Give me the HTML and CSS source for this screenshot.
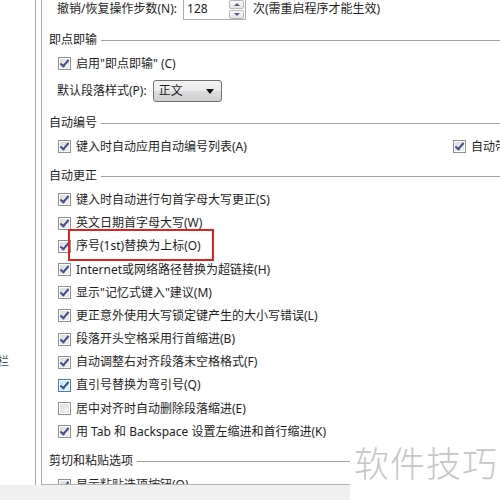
FILE: index.html
```html
<!DOCTYPE html>
<html lang="zh-CN">
<head>
    <meta charset="UTF-8">
    <title>Word 选项 - 高级</title>
    <link rel="stylesheet" href="styles.css">
</head>
<body>

<div class="window">
    <div class="panes">
        <nav class="nav">
            <div class="nav-item">栏</div>
        </nav>

        <main class="options">
            <div class="row row--first">
                <span class="label">撤销/恢复操作步数(N):</span>
                <div class="spin">
                    <span class="spin-value">128</span>
                    <span class="spin-buttons">
                        <span class="spin-btn spin-btn--up"></span>
                        <span class="spin-btn spin-btn--down"></span>
                    </span>
                </div>
                <span class="label">次(需重启程序才能生效)</span>
            </div>

            <section class="group">
                <div class="group-title">即点即输</div>
                <label class="row opt"><span class="box checked"></span>启用"即点即输" (C)</label>
                <div class="row row--combo">
                    <span class="label">默认段落样式(P):</span>
                    <div class="combo">正文<span class="combo-arrow"></span></div>
                </div>
            </section>

            <section class="group">
                <div class="group-title">自动编号</div>
                <div class="row split">
                    <label class="opt"><span class="box checked"></span>键入时自动应用自动编号列表(A)</label>
                    <label class="opt"><span class="box checked"></span>自动带圆括号的编号(R)</label>
                </div>
            </section>

            <section class="group">
                <div class="group-title">自动更正</div>
                <label class="row opt"><span class="box checked"></span>键入时自动进行句首字母大写更正(S)</label>
                <label class="row opt"><span class="box checked"></span>英文日期首字母大写(W)</label>
                <label class="row opt marked"><span class="box checked"></span>序号(1st)替换为上标(O)</label>
                <label class="row opt"><span class="box checked"></span>Internet或网络路径替换为超链接(H)</label>
                <label class="row opt"><span class="box checked"></span>显示"记忆式键入"建议(M)</label>
                <label class="row opt"><span class="box checked"></span>更正意外使用大写锁定键产生的大小写错误(L)</label>
                <label class="row opt"><span class="box checked"></span>段落开头空格采用行首缩进(B)</label>
                <label class="row opt"><span class="box checked"></span>自动调整右对齐段落末空格格式(F)</label>
                <label class="row opt"><span class="box checked hover"></span>直引号替换为弯引号(Q)</label>
                <label class="row opt"><span class="box"></span>居中对齐时自动删除段落缩进(E)</label>
                <label class="row opt"><span class="box checked"></span>用 Tab 和 Backspace 设置左缩进和首行缩进(K)</label>
            </section>

            <section class="group">
                <div class="group-title">剪切和粘贴选项</div>
                <label class="row opt"><span class="box checked"></span>显示粘贴选项按钮(O)</label>
            </section>
        </main>
    </div>
    <div class="footer"></div>
</div>

<div class="watermark">软件技巧</div>

</body>
</html>
```

FILE: styles.css
```css
* {
    margin: 0;
    padding: 0;
    box-sizing: border-box;
}

body {
    width: 500px;
    height: 500px;
    overflow: hidden;
    position: relative;
    background: #f0f0f0;
    font-family: "Noto Sans", "Noto Sans CJK SC", sans-serif;
    font-size: 12px;
    line-height: 16px;
    color: #1e1e1e;
}

.panes {
    display: flex;
    gap: 5px;
    height: 485px;
    background: #fff;
}

.nav {
    width: 36px;
    flex: none;
    border-right: 1px solid #a8a8a8;
    padding-top: 354px;
    overflow: hidden;
}

.nav-item {
    margin-left: -3px;
    color: #444;
}

.footer {
    height: 15px;
    background: #f0f0f0;
}

.options {
    flex: 1;
    overflow: hidden;
    border-left: 1px solid #a8a8a8;
    border-bottom: 1px solid #b4b4b4;
}

/* rows */

.row {
    display: flex;
    align-items: center;
    height: 23.2px;
    padding-left: 16px;
    white-space: nowrap;
}

.row--first {
    height: 26px;
    margin-top: -4px;
    padding-left: 15px;
}

.row--combo {
    height: 28px;
    margin-top: 2px;
    padding-left: 15px;
}

.group {
    margin-top: 6px;
}

.group-title {
    display: flex;
    align-items: center;
    height: 24px;
    padding-left: 7px;
    color: #222;
    white-space: nowrap;
}

.group-title::after {
    content: "";
    flex: 1;
    height: 1px;
    margin-left: 4px;
    background: #a0a0a0;
}

.opt {
    display: flex;
    align-items: center;
}

.split .opt:first-child {
    width: 395px;
    flex: none;
}

.split .opt {
    flex: none;
}

/* checkbox */

.box {
    position: relative;
    width: 13px;
    height: 13px;
    flex: none;
    margin-right: 5px;
    border: 1px solid #8e8f8f;
    background: #fff;
}

.box::before {
    content: "";
    position: absolute;
    inset: 1px;
    background: linear-gradient(135deg, #dcdcdc, #f6f6f6);
    border: 1px solid #e4e4e4;
}

.box.hover {
    border-color: #3c7fb1;
}

.box.hover::before {
    background: linear-gradient(135deg, #b9e9fb, #e8f9fe);
    border-color: #c6ecfa;
}

.box.checked::after {
    content: "";
    position: absolute;
    left: 3px;
    top: 0px;
    width: 3px;
    height: 7px;
    border-right: 2px solid #3d4f8c;
    border-bottom: 2px solid #3d4f8c;
    transform: rotate(40deg);
}

/* red annotation */

.marked {
    position: relative;
}

.marked::after {
    content: "";
    position: absolute;
    left: 26px;
    top: -6px;
    width: 142px;
    height: 28px;
    border: 2px solid #e0221e;
}

/* spin box */

.spin {
    display: flex;
    align-items: center;
    justify-content: space-between;
    width: 63px;
    height: 22px;
    margin: 0 7px 0 6px;
    border: 1px solid #abadb3;
    border-top-color: #abadb3;
    background: #fff;
}

.spin-value {
    padding-left: 3px;
}

.spin-buttons {
    display: flex;
    flex-direction: column;
    gap: 1px;
    padding: 1px;
}

.spin-btn {
    position: relative;
    width: 15px;
    height: 9px;
    border: 1px solid #b7b7b7;
    border-radius: 2px;
    background: linear-gradient(#fbfbfb, #e3e3e3);
}

.spin-btn::after {
    content: "";
    position: absolute;
    left: 4px;
    width: 0;
    height: 0;
    border-left: 3px solid transparent;
    border-right: 3px solid transparent;
}

.spin-btn--up::after {
    top: 2px;
    border-bottom: 3px solid #4d6185;
}

.spin-btn--down::after {
    top: 2px;
    border-top: 3px solid #4d6185;
}

/* combo box */

.combo {
    position: relative;
    width: 69px;
    height: 22px;
    margin-left: 6px;
    padding-left: 5px;
    display: flex;
    align-items: center;
    border: 1px solid #707070;
    border-radius: 3px;
    background: linear-gradient(#f3f3f3 0%, #ebebeb 50%, #dddddd 51%, #cfcfcf 100%);
}

.combo-arrow {
    position: absolute;
    right: 7px;
    top: 8px;
    border-left: 4px solid transparent;
    border-right: 4px solid transparent;
    border-top: 5px solid #111;
}

/* watermark */

.watermark {
    position: absolute;
    right: 0;
    bottom: 0;
    width: 150px;
    height: 58px;
    padding-left: 4px;
    background: #fff;
    color: #c6c6c6;
    font-family: "Noto Sans CJK SC", sans-serif;
    font-weight: 300;
    font-size: 35px;
    line-height: 40px;
    letter-spacing: 1px;
}
```
